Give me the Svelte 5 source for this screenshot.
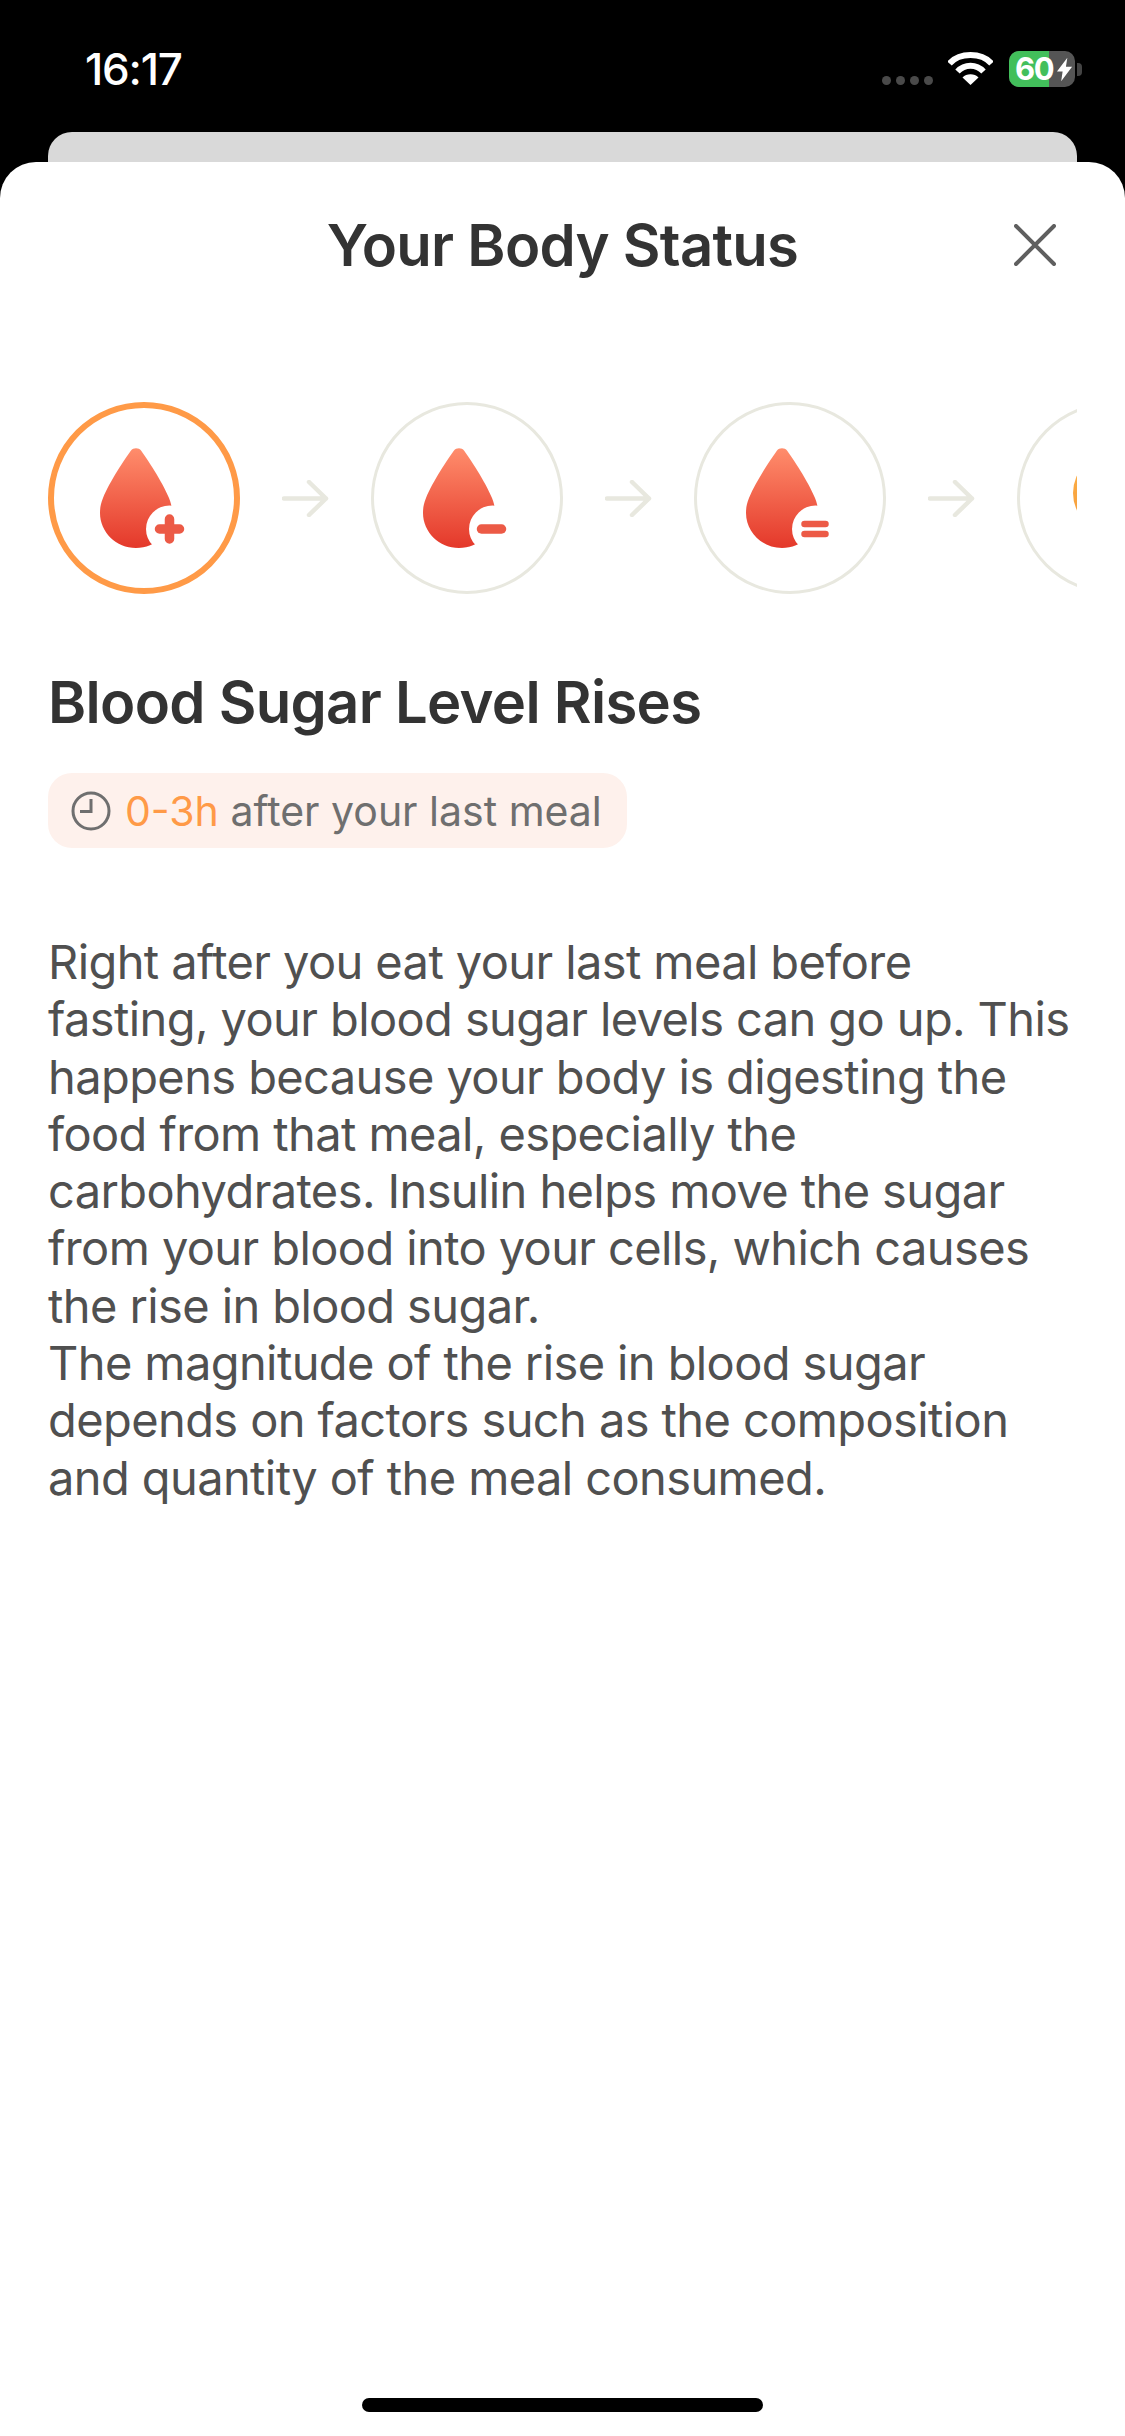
<script>
  const steps = [
    { id: 'plus', active: true },
    { id: 'minus', active: false },
    { id: 'equal', active: false },
    { id: 'next', active: false }
  ];
</script>

<div class="screen">
  <div class="status">
    <span class="time">16:17</span>
    <div class="sys">
      <div class="dots"><i></i><i></i><i></i><i></i></div>
      <svg class="wifi" viewBox="0 0 45 33" width="45" height="33">
        <path d="M1.500 11.500C7 5.300 14.300 3 22.500 3S38 5.300 43.500 11.500" fill="none" stroke="#fff" stroke-width="6"/>
        <path d="M9.500 19.500c3.500-3.800 8-5.800 13-5.800s9.500 2 13 5.800" fill="none" stroke="#fff" stroke-width="6"/>
        <path d="M22.500 33l-8-7.500c2-2 5-3.200 8-3.200s6 1.200 8 3.200z" fill="#fff"/>
      </svg>
      <div class="battery">
        <div class="fill"></div>
        <span class="pct">60</span>
        <svg class="bolt" viewBox="0 0 18 25" width="17" height="25"><path d="M12 0L1 14.500h6L5.500 25 17 9.500h-6.500z" fill="#fff"/></svg>
      </div>
      <div class="nub"></div>
    </div>
  </div>

  <div class="backcard"></div>

  <div class="sheet">
    <header class="head">
      <h1>Your Body Status</h1>
      <svg class="close" viewBox="0 0 42 42" width="42" height="42">
        <path d="M2 2l38 38M40 2L2 40" stroke="#5f5f5f" stroke-width="4" stroke-linecap="round"/>
      </svg>
    </header>

    <div class="strip">
      {#each steps as s, i}
        {#if i > 0}
          <svg class="arrow" viewBox="0 0 47 37" width="47" height="37">
            <path d="M2 18.500h42M27 2l17 16.500L27 35" fill="none" stroke="#e8e8df" stroke-width="4.500" stroke-linecap="round" stroke-linejoin="round"/>
          </svg>
        {/if}
        <div class="step" class:active={s.active}>
          {#if s.id === 'next'}
            <div class="sun"></div>
          {:else}
            <svg class="drop" viewBox="0 0 90 100" width="90" height="100">
              <defs>
                <linearGradient id={'g' + i} x1="0" y1="0" x2="0" y2="1">
                  <stop offset="0" stop-color="#ff8d6c"/>
                  <stop offset="1" stop-color="#e4382a"/>
                </linearGradient>
              </defs>
              <path d="M31 2.500c2-3 8-3 10 0C47 11 62 33 69 50c2.300 5.500 3 10 3 15 0 19-16.200 35-36 35S0 84 0 65c0-5 .7-9.500 3-15C10 33 25 11 31 2.500z" fill={'url(#g' + i + ')'}/>
              <circle cx="69.500" cy="81" r="23.500" fill="#fff"/>
              {#if s.id === 'plus'}
                <path d="M69.500 71v20M59.500 81h20" stroke="#ec5a46" stroke-width="9.500" stroke-linecap="round"/>
              {:else if s.id === 'minus'}
                <path d="M58.500 81h20" stroke="#ec5a46" stroke-width="9.500" stroke-linecap="round"/>
              {:else}
                <path d="M58.500 76h21M58.500 86h21" stroke="#ec5a46" stroke-width="6.500" stroke-linecap="round"/>
              {/if}
            </svg>
          {/if}
        </div>
      {/each}
    </div>

    <h2>Blood Sugar Level Rises</h2>

    <div class="pill">
      <svg viewBox="0 0 40 40" width="40" height="40">
        <circle cx="20" cy="20" r="18" fill="none" stroke="#6f6f6f" stroke-width="3"/>
        <path d="M20 8v12.500H9" fill="none" stroke="#6f6f6f" stroke-width="3"/>
      </svg>
      <span class="txt"><span class="hl">0-3h</span> after your last meal</span>
    </div>

    <p class="body">
      Right after you eat your last meal before<br>
      fasting, your blood sugar levels can go up. This<br>
      happens because your body is digesting the<br>
      food from that meal, especially the<br>
      carbohydrates. Insulin helps move the sugar<br>
      from your blood into your cells, which causes<br>
      the rise in blood sugar.<br>
      The magnitude of the rise in blood sugar<br>
      depends on factors such as the composition<br>
      and quantity of the meal consumed.
    </p>

    <div class="home"></div>
  </div>
</div>

<style>
  :global(body) { margin: 0; background: #000; }
  .screen {
    width: 1125px;
    height: 2436px;
    background: #000;
    display: flex;
    flex-direction: column;
    overflow: hidden;
    font-family: Inter, "Noto Sans", sans-serif;
  }
  .status {
    height: 132px;
    flex: none;
    box-sizing: border-box;
    padding: 48px 43px 0 85px;
    display: flex;
    justify-content: space-between;
    align-items: flex-start;
  }
  .time { color: #fff; font-size: 44px; font-weight: 500; line-height: 42px; letter-spacing: -1.2px; }
  .sys { display: flex; align-items: flex-start; margin-top: 3px; }
  .dots { display: flex; gap: 5px; margin-top: 25px; margin-right: 15px; }
  .dots i { width: 9px; height: 9px; border-radius: 50%; background: #4a4a4a; display: block; }
  .wifi { margin-top: 1px; margin-right: 16px; }
  .battery {
    position: relative;
    width: 66px;
    height: 36px;
    box-sizing: border-box;
    padding: 0 2px 0 6px;
    border-radius: 10px;
    background: #555;
    overflow: hidden;
    display: flex;
    align-items: center;
    justify-content: space-between;
  }
  .fill { position: absolute; inset: 0 26px 0 0; background: #42bf5b; }
  .pct {
    position: relative;
    color: #fff;
    font-size: 31px;
    font-weight: 700;
    line-height: 36px;
    letter-spacing: -1.5px;
  }
  .bolt { position: relative; flex: none; }
  .nub { width: 5px; height: 13px; margin-top: 12px; margin-left: 2px; background: #444; border-radius: 0 4px 4px 0; }

  .backcard {
    height: 30px;
    flex: none;
    margin: 0 48px;
    background: #d9d9d9;
    border-radius: 24px 24px 0 0;
  }
  .sheet {
    flex: 1;
    background: #fff;
    border-radius: 36px 36px 0 0;
    display: flex;
    flex-direction: column;
    min-height: 0;
  }
  .head {
    height: 166px;
    flex: none;
    position: relative;
    display: flex;
    align-items: center;
    justify-content: center;
  }
  h1 {
    margin: 0;
    font-size: 58px;
    font-weight: 600;
    color: #333;
    letter-spacing: -0.7px;
    line-height: 66px;
  }
  .close { position: absolute; left: 1014px; top: 62px; }
  .strip {
    margin: 74px 48px 0;
    display: flex;
    align-items: center;
    gap: 42px;
    overflow: hidden;
    flex: none;
    height: 192px;
  }
  .step {
    flex: none;
    box-sizing: border-box;
    width: 192px;
    height: 192px;
    border-radius: 50%;
    border: 3px solid #e8e8df;
    display: flex;
    align-items: center;
    justify-content: center;
    position: relative;
  }
  .step.active { border: 6px solid #ff9a47; }
  .drop { margin-left: 2px; }
  .arrow { flex: none; }
  .sun {
    width: 80px;
    height: 80px;
    border-radius: 50%;
    background: linear-gradient(#ffb347, #f49a3a);
    position: absolute;
    left: 53px;
    top: 48px;
  }
  h2 {
    margin: 74px 0 0 48px;
    font-size: 58px;
    font-weight: 600;
    color: #333;
    line-height: 68px;
    letter-spacing: -0.7px;
  }
  .pill {
    margin: 37px 0 0 48px;
    align-self: flex-start;
    width: 579px;
    box-sizing: border-box;
    height: 75px;
    padding-left: 23px;
    background: #fef1ec;
    border-radius: 24px;
    display: flex;
    align-items: center;
    gap: 14px;
  }
  .txt { font-size: 41px; color: #6f6f6f; white-space: nowrap; line-height: 48px; letter-spacing: 0; }
  .hl { color: #ff9a47; }
  .body {
    margin: 85px 0 0 48px;
    font-size: 47px;
    line-height: 57.300px;
    color: #505050;
    white-space: nowrap;
    letter-spacing: -0.6px;
  }
  .home {
    margin: auto auto 24px;
    width: 401px;
    height: 14px;
    border-radius: 7px;
    background: #000;
    flex: none;
  }
</style>
